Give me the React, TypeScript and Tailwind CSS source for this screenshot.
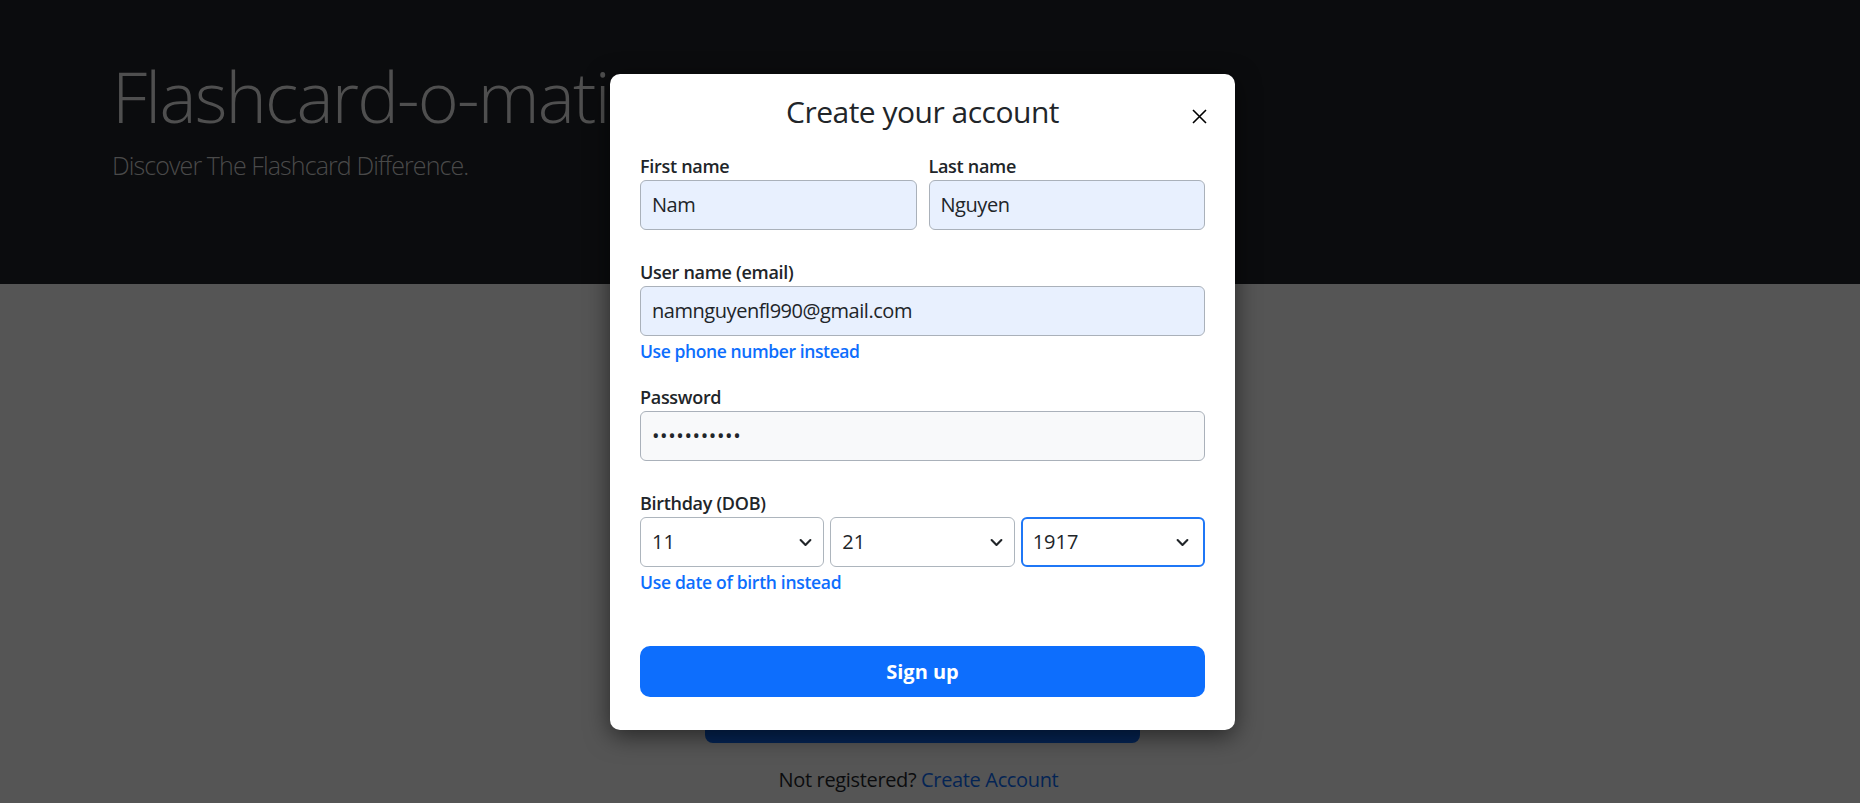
import React from "react";

function Chevron() {
  return (
    <svg width="13" height="13" viewBox="0 0 16 16" fill="none">
      <path d="M2 5l6 6 6-6" stroke="#212529" strokeWidth="2.6" strokeLinecap="round" strokeLinejoin="round" />
    </svg>
  );
}

function Label({ children }: { children: React.ReactNode }) {
  return <div className="text-[18px] font-semibold leading-[27px] tracking-[-0.3px] text-[#212529]">{children}</div>;
}

function Field({ value, bg = "bg-[#e8f0fe]", track = "tracking-[-0.45px]" }: { value: string; bg?: string; track?: string }) {
  return (
    <div className={`h-[50px] rounded-[6px] border border-[#aab1ba] ${bg} px-[11px] flex items-center text-[20px] ${track} text-[#212529]`}>
      {value}
    </div>
  );
}

export default function App() {
  return (
    <div className="relative w-full h-[803px] overflow-hidden bg-[#555555] font-['Open_Sans',sans-serif]">
      <header className="h-[284px] bg-[#0b0c0e] pl-[112px] pt-[54px]">
        <h1 className="text-[70px] font-light leading-[84px] tracking-[-1.8px] text-[#4f4f4f] whitespace-nowrap">Flashcard-o-matic</h1>
        <p className="mt-[9px] text-[25px] font-light leading-[37px] tracking-[-0.9px] text-[#4a4a4a]">Discover The Flashcard Difference.</p>
      </header>
      <main className="w-[1845px] flex flex-col items-center pt-[409px]">
        <div className="w-[435px] h-[50px] rounded-[8px] bg-[#042454]" />
        <p className="mt-[22px] mr-[8px] text-[20px] leading-[30px] tracking-[-0.35px] text-[#0b0c0e]">
          Not registered? <span className="text-[#042454]">Create Account</span>
        </p>
      </main>

      <div className="absolute left-[610px] top-[74px] w-[625px] rounded-[10px] bg-white px-[30px] pt-[20px] pb-[33px] shadow-[0_6px_24px_rgba(0,0,0,0.55)]">
        <div className="h-[36px] text-center text-[30px] font-medium leading-[36px] tracking-[-0.5px] text-[#212529]">Create your account</div>
        <button className="absolute top-[35px] right-[28px] w-[15px] h-[15px]" aria-label="Close">
          <svg width="15" height="15" viewBox="0 0 15 15">
            <path d="M1 1L14 14M14 1L1 14" stroke="#000" strokeWidth="1.6" />
          </svg>
        </button>

        <div className="mt-[23px] grid grid-cols-2 gap-x-[12px]">
          <div>
            <Label>First name</Label>
            <Field value="Nam" />
          </div>
          <div>
            <Label>Last name</Label>
            <Field value="Nguyen" />
          </div>
        </div>

        <div className="mt-[29px]">
          <Label>User name (email)</Label>
          <Field value="namnguyenfl990@gmail.com" />
          <div className="mt-[2px] text-[17.5px] font-semibold leading-[27px] tracking-[-0.4px] text-[#0d6efd]">Use phone number instead</div>
        </div>

        <div className="mt-[19px]">
          <Label>Password</Label>
          <Field value="•••••••••••" bg="bg-[#f8f9fa]" track="tracking-[0.6px]" />
        </div>

        <div className="mt-[29px]">
          <Label>Birthday (DOB)</Label>
          <div className="grid grid-cols-3 gap-[6px]">
            <div className="h-[50px] rounded-[6px] border border-[#adb5bd] bg-white pl-[11px] pr-[11px] flex items-center justify-between text-[20px] text-[#212529]">
              <span>11</span>
              <Chevron />
            </div>
            <div className="h-[50px] rounded-[6px] border border-[#adb5bd] bg-white pl-[11px] pr-[11px] flex items-center justify-between text-[20px] text-[#212529]">
              <span>21</span>
              <Chevron />
            </div>
            <div className="h-[50px] rounded-[6px] border-2 border-[#1f77f6] bg-white pl-[10px] pr-[14px] flex items-center justify-between text-[20px] text-[#212529]">
              <span>1917</span>
              <Chevron />
            </div>
          </div>
          <div className="mt-[2px] text-[17.5px] font-semibold leading-[27px] tracking-[-0.3px] text-[#0d6efd]">Use date of birth instead</div>
        </div>

        <button className="mt-[50px] w-full h-[51px] rounded-[10px] bg-[#0d6efd] text-[20px] font-bold text-white">Sign up</button>
      </div>
    </div>
  );
}
